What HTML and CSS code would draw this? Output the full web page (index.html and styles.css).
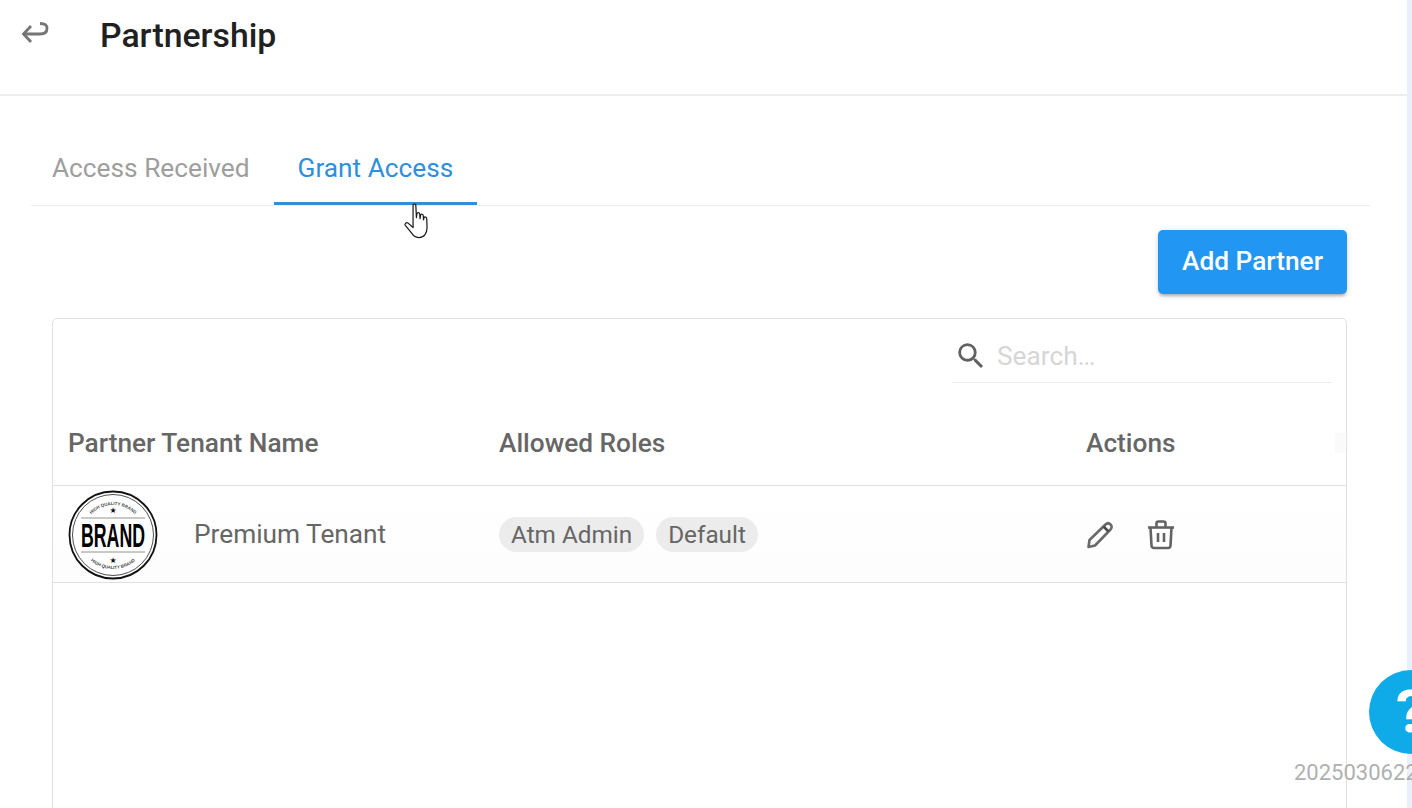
FILE: index.html
```html
<!DOCTYPE html>
<html lang="en">
<head>
<meta charset="utf-8">
<title>Partnership</title>
<link rel="stylesheet" href="styles.css">
</head>
<body>
<div class="page">
  <main class="main">
    <header class="topbar">
      <svg class="back-icon" viewBox="0 0 30 26" width="30" height="26" fill="none" stroke="#757575" stroke-width="2.8">
        <path d="M11 6 L3.5 14 L11 22" stroke-linejoin="miter"/>
        <path d="M3.5 14 H20 C24.5 14 27 12 27 8.5 C27 5 24.5 3.5 20 3.5"/>
      </svg>
      <h1 class="title">Partnership</h1>
    </header>
    <section class="content">
      <nav class="tabs">
        <div class="tab">Access Received</div>
        <div class="tab tab-active">Grant Access</div>
      </nav>
      <div class="toolbar">
        <button class="add-btn">Add Partner</button>
      </div>
      <div class="card">
        <div class="search-row">
          <div class="search">
            <svg class="search-icon" viewBox="0 0 24 24" width="34" height="34" fill="#616161">
              <path d="M15.5 14h-.79l-.28-.27A6.47 6.47 0 0 0 16 9.5 6.5 6.5 0 1 0 9.5 16c1.61 0 3.09-.59 4.23-1.57l.27.28v.79l5 4.99L20.49 19l-4.99-5zm-6 0C7.01 14 5 11.99 5 9.5S7.01 5 9.5 5 14 7.01 14 9.5 11.99 14 9.5 14z"/>
            </svg>
            <span class="search-placeholder">Search…</span>
          </div>
        </div>
        <div class="table-head">
          <div class="col-name">Partner Tenant Name</div>
          <div class="col-roles">Allowed Roles</div>
          <div class="col-actions">Actions</div>
          <div class="head-stub"></div>
        </div>
        <div class="table-row">
          <div class="col-name tenant">
            <svg class="brand" viewBox="0 0 90 90" width="90" height="90">
              <defs>
                <path id="arcTop" d="M15 45 A30 30 0 0 1 75 45"/>
                <path id="arcBottom" d="M11 45 A34 34 0 0 0 79 45"/>
              </defs>
              <circle cx="45" cy="45" r="43.5" fill="#fff" stroke="#111" stroke-width="1.8"/>
              <circle cx="45" cy="45" r="40.5" fill="none" stroke="#222" stroke-width="0.8"/>
              <text class="brand-small" text-anchor="middle"><textPath href="#arcTop" startOffset="50%">HIGH QUALITY BRAND</textPath></text>
              <text class="brand-small" text-anchor="middle"><textPath href="#arcBottom" startOffset="50%">HIGH QUALITY BRAND</textPath></text>
              <text class="brand-star" x="45" y="23" text-anchor="middle">★</text>
              <text class="brand-star" x="45" y="73" text-anchor="middle">★</text>
              <path d="M13 28 H77 M13 62 H77" stroke="#777" stroke-width="0.8"/>
              <text class="brand-word" x="45" y="57" text-anchor="middle" textLength="64" lengthAdjust="spacingAndGlyphs">BRAND</text>
            </svg>
            <span class="tenant-name">Premium Tenant</span>
          </div>
          <div class="col-roles chips">
            <span class="chip">Atm Admin</span>
            <span class="chip">Default</span>
          </div>
          <div class="col-actions actions">
            <svg viewBox="0 0 28 28" width="28" height="28" fill="none" stroke="#696969" stroke-width="2.6" stroke-linejoin="round">
              <path d="M2.5 26 L3.5 19 L19.5 3.5 C21 2 23 2 24.5 3.5 C26 5 26 7 24.5 8.5 L9 24.5 Z"/>
              <path d="M17.5 5.5 L22.5 10.5" stroke-width="2.6" stroke="#4a4a4a"/>
            </svg>
            <svg viewBox="0 0 28 30" width="28" height="30" fill="none" stroke="#636363" stroke-width="2.6" stroke-linejoin="round">
              <path d="M1 7.5 H27"/>
              <path d="M9.5 7 V3.5 C9.5 2 10.5 1.5 11.5 1.5 H16.5 C17.5 1.5 18.5 2 18.5 3.5 V7"/>
              <path d="M3.5 8 L4.5 25.5 C4.6 27.2 5.6 28 7 28 H21 C22.4 28 23.4 27.2 23.5 25.5 L24.5 8"/>
              <path d="M11 13 V22 M17 13 V22"/>
            </svg>
          </div>
        </div>
      </div>
    </section>
  </main>
  <aside class="edge"></aside>
</div>
<svg class="cursor" viewBox="0 0 26 36" width="29" height="40" fill="#fff" stroke="#1a1a1a" stroke-width="1.1" stroke-linejoin="round">
  <path d="M9 3 C9 1.5 11.5 1.5 11.5 3 L12 14 L12.5 10.5 C13 9 15 9.3 15 11 L15.3 15 L15.8 11.8 C16.3 10.5 18.2 10.8 18.2 12.4 L18.4 16 L18.9 14 C19.5 13 21.3 13.3 21.3 15 L21.6 23 C21.6 28 19 32 14.5 32 C10.5 32 9 30 6.5 26.5 L2 21 C1 19.5 3 18 4.5 19 L9 23 Z"/>
</svg>
<div class="fab"><span class="fab-mark">?</span></div>
<div class="version">20250306220</div>
</body>
</html>
```
FILE: styles.css
```css
* { box-sizing: border-box; }
html, body { margin: 0; height: 100%; overflow: hidden; background: #fff; }
body { font-family: Roboto, "Liberation Sans", sans-serif; color: #666666; }
.page { display: flex; height: 808px; }
.main { width: 1407px; flex: none; }
.edge { flex: 1; background: #e9f0fb; }
.topbar {
  height: 96px;
  border-bottom: 2px solid #eeeeee;
  display: flex;
  align-items: flex-start;
  padding: 20px 0 0 20px;
}
.back-icon { flex: none; }
.title {
  margin: -3px 0 0 50px;
  font-size: 33.8px;
  line-height: 38px;
  font-weight: 500;
  color: #212121;
}
.content { padding: 0 37px 0 31px; }
.tabs {
  display: flex;
  height: 110px;
  align-items: flex-end;
  border-bottom: 1px solid #eeeeee;
}
.tab {
  height: 68px;
  padding: 15px 21px 0;
  font-size: 26.25px;
  line-height: 32px;
  color: #9e9e9e;
}
.tab-active {
  color: #2f8fdc;
  margin-left: 3px;
  padding: 15px 24px 0;
  border-bottom: 3px solid #2f8fdc;
}
.toolbar {
  display: flex;
  justify-content: flex-end;
  padding: 24px 23px 24px 0;
}
.add-btn {
  width: 189px;
  height: 64px;
  border: 0;
  border-radius: 5px;
  background: #2196f3;
  color: #fff;
  font-family: Roboto, "Liberation Sans", sans-serif;
  font-size: 26.25px;
  font-weight: 500;
  padding: 0 0 2px;
  box-shadow: 0 3px 3px -1px rgba(0,0,0,.25), 0 1px 6px rgba(0,0,0,.12);
}
.card {
  margin-left: 21px;
  margin-right: 23px;
  height: 600px;
  border: 1px solid #e0e0e0;
  border-radius: 5px;
}
.search-row {
  display: flex;
  justify-content: flex-end;
  padding: 0 14px;
  height: 64px;
}
.search {
  width: 380px;
  height: 64px;
  border-bottom: 1px solid #eeeeee;
  display: flex;
  align-items: center;
  padding: 10px 0 0 2px;
}
.search-icon { flex: none; }
.search-placeholder { margin-left: 9px; font-size: 26.25px; color: #d6d6d6; }
.table-head, .table-row { display: flex; align-items: center; }
.table-head {
  height: 103px;
  padding: 17px 0 0 15px;
  border-bottom: 1px solid #e0e0e0;
  font-size: 26.25px;
  font-weight: 500;
  color: #666666;
}
.table-row {
  height: 97px;
  padding: 2px 0 0 15px;
  border-bottom: 1px solid #e0e0e0;
  font-size: 26.25px;
  background: linear-gradient(#ffffff, #fdfdfd);
}
.col-name { width: 431px; flex: none; }
.col-roles { width: 587px; flex: none; }
.head-stub { width: 10px; height: 20px; margin: 0 1px 0 auto; background: #fafafa; }
.tenant { display: flex; align-items: center; }
.brand { flex: none; }
.tenant-name { margin-left: 36px; margin-top: -2px; }
.chips { display: flex; gap: 12px; font-size: 24.3px; margin-top: -2px; }
.chip {
  height: 35px;
  line-height: 35px;
  padding: 0 12px;
  border-radius: 18px;
  background: #ececec;
}
.actions { display: flex; align-items: center; gap: 33px; }
.brand-small { font-size: 4.4px; font-weight: 700; font-family: "Liberation Sans", sans-serif; fill: #444; }
.brand-star { font-size: 8px; font-family: "DejaVu Sans", sans-serif; fill: #111; }
.brand-word { font-size: 33px; font-weight: 700; font-family: "Liberation Sans", sans-serif; fill: #000; }
.cursor { position: absolute; left: 403px; top: 202px; }
.fab {
  position: absolute;
  left: 1369px;
  top: 670px;
  width: 84px;
  height: 84px;
  border-radius: 50%;
  background: #0fabe8;
  overflow: hidden;
}
.fab-mark {
  position: absolute;
  left: 27px;
  top: 9px;
  color: #fff;
  font-size: 60px;
  line-height: 66px;
  font-weight: 700;
}
.version {
  position: absolute;
  left: 1294px;
  top: 759px;
  font-size: 22px;
  line-height: 28px;
  color: #b0b0b0;
  white-space: nowrap;
}
```
